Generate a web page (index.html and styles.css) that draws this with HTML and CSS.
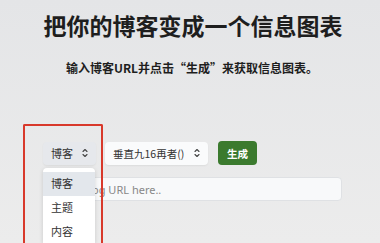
FILE: index.html
```html
<!DOCTYPE html>
<html lang="zh-CN">
<head>
    <meta charset="UTF-8">
    <meta name="viewport" content="width=device-width, initial-scale=1.0">
    <title>博客信息图表</title>
    <link rel="stylesheet" href="styles.css">
</head>
<body>
    <h1 class="title">把你的博客变成一个信息图表</h1>
    <p class="subtitle">输入博客URL并点击“生成”来获取信息图表。</p>

    <div class="form">
        <div class="controls">
            <div class="select select-type">博客
                <svg class="chev" viewBox="0 0 6 12" width="6" height="12"><path d="M1 4.5 L3 2.5 L5 4.5 M1 7.5 L3 9.5 L5 7.5" fill="none" stroke="#444" stroke-width="1.1" stroke-linecap="round" stroke-linejoin="round"/></svg>
            </div>
            <div class="select select-layout">垂直九16再者()
                <svg class="chev" viewBox="0 0 6 12" width="6" height="12"><path d="M1 4.5 L3 2.5 L5 4.5 M1 7.5 L3 9.5 L5 7.5" fill="none" stroke="#444" stroke-width="1.1" stroke-linecap="round" stroke-linejoin="round"/></svg>
            </div>
            <button class="btn-generate">生成</button>
        </div>
        <input class="url-input" type="text" placeholder="Enter blog URL here..">
    </div>

    <!-- open select menu -->
    <ul class="menu">
        <li class="active">博客</li>
        <li>主题</li>
        <li>内容</li>
    </ul>

    <!-- annotation box -->
    <div class="highlight"></div>
</body>
</html>
```

FILE: styles.css
```css
html { overflow: hidden; }
body { margin: 0; padding-top: 10px; height: 243px; overflow: hidden; position: relative; box-sizing: border-box;
       font-family: "Noto Sans CJK SC", "Noto Sans", sans-serif; color: #222;
       background: linear-gradient(#e4e5e7, #ececec); }
.title { margin: 0; font-size: 23px; line-height: 30px; font-weight: 700; text-align: center; color: #1e1e1e; padding-left: 6px; }
.subtitle { margin: 19px 0 0; font-size: 12px; line-height: 18px; font-weight: 700; text-align: center; color: #1e1e1e; padding-left: 4px; }
.form { width: 299px; margin: 64px 0 0 43px; }
.controls { display: flex; align-items: center; }
.select { height: 23px; box-sizing: border-box; display: flex; align-items: center; justify-content: space-between;
          padding: 0 8px; font-size: 11px; color: #333; border-radius: 4px; box-shadow: 0 1px 2px rgba(0,0,0,0.06); }
.select-type { width: 53px; background: #e6e8ec; }
.select-layout { width: 103px; margin-left: 9px; background: #fafbfc; font-size: 10.5px; }
.chev { flex: none; }
.btn-generate { margin-left: 10px; width: 39px; height: 24px; padding: 0; border: none; border-radius: 4px;
                background: #3b7a2e; color: #fff; font-family: inherit; font-size: 10.5px; font-weight: 700; }
.url-input { display: block; margin-top: 12px; width: 299px; height: 24px; box-sizing: border-box;
             padding: 0 8px; border: 1px solid #dfe1e4; border-radius: 4px; background: #f8f9fa;
             font-family: "Noto Sans", sans-serif; font-size: 11px; color: #333; }
.url-input::placeholder { color: #888; }
.menu { position: absolute; left: 43px; top: 168px; width: 52px; margin: 0; padding: 4px 0 0; list-style: none;
        background: #fff; border-radius: 4px 4px 0 0; box-shadow: 0 1px 4px rgba(0,0,0,0.15); height: 75px; box-sizing: border-box; overflow: hidden; }
.menu li { height: 24px; line-height: 22px; padding-left: 8px; font-size: 11px; color: #333; }
.menu li.active { background: #e3e7ec; }
.highlight { position: absolute; left: 23px; top: 124px; width: 80px; height: 119px; box-sizing: border-box;
             border: 2px solid #d8392b; border-bottom: none; border-radius: 2px 2px 0 0; }
```
